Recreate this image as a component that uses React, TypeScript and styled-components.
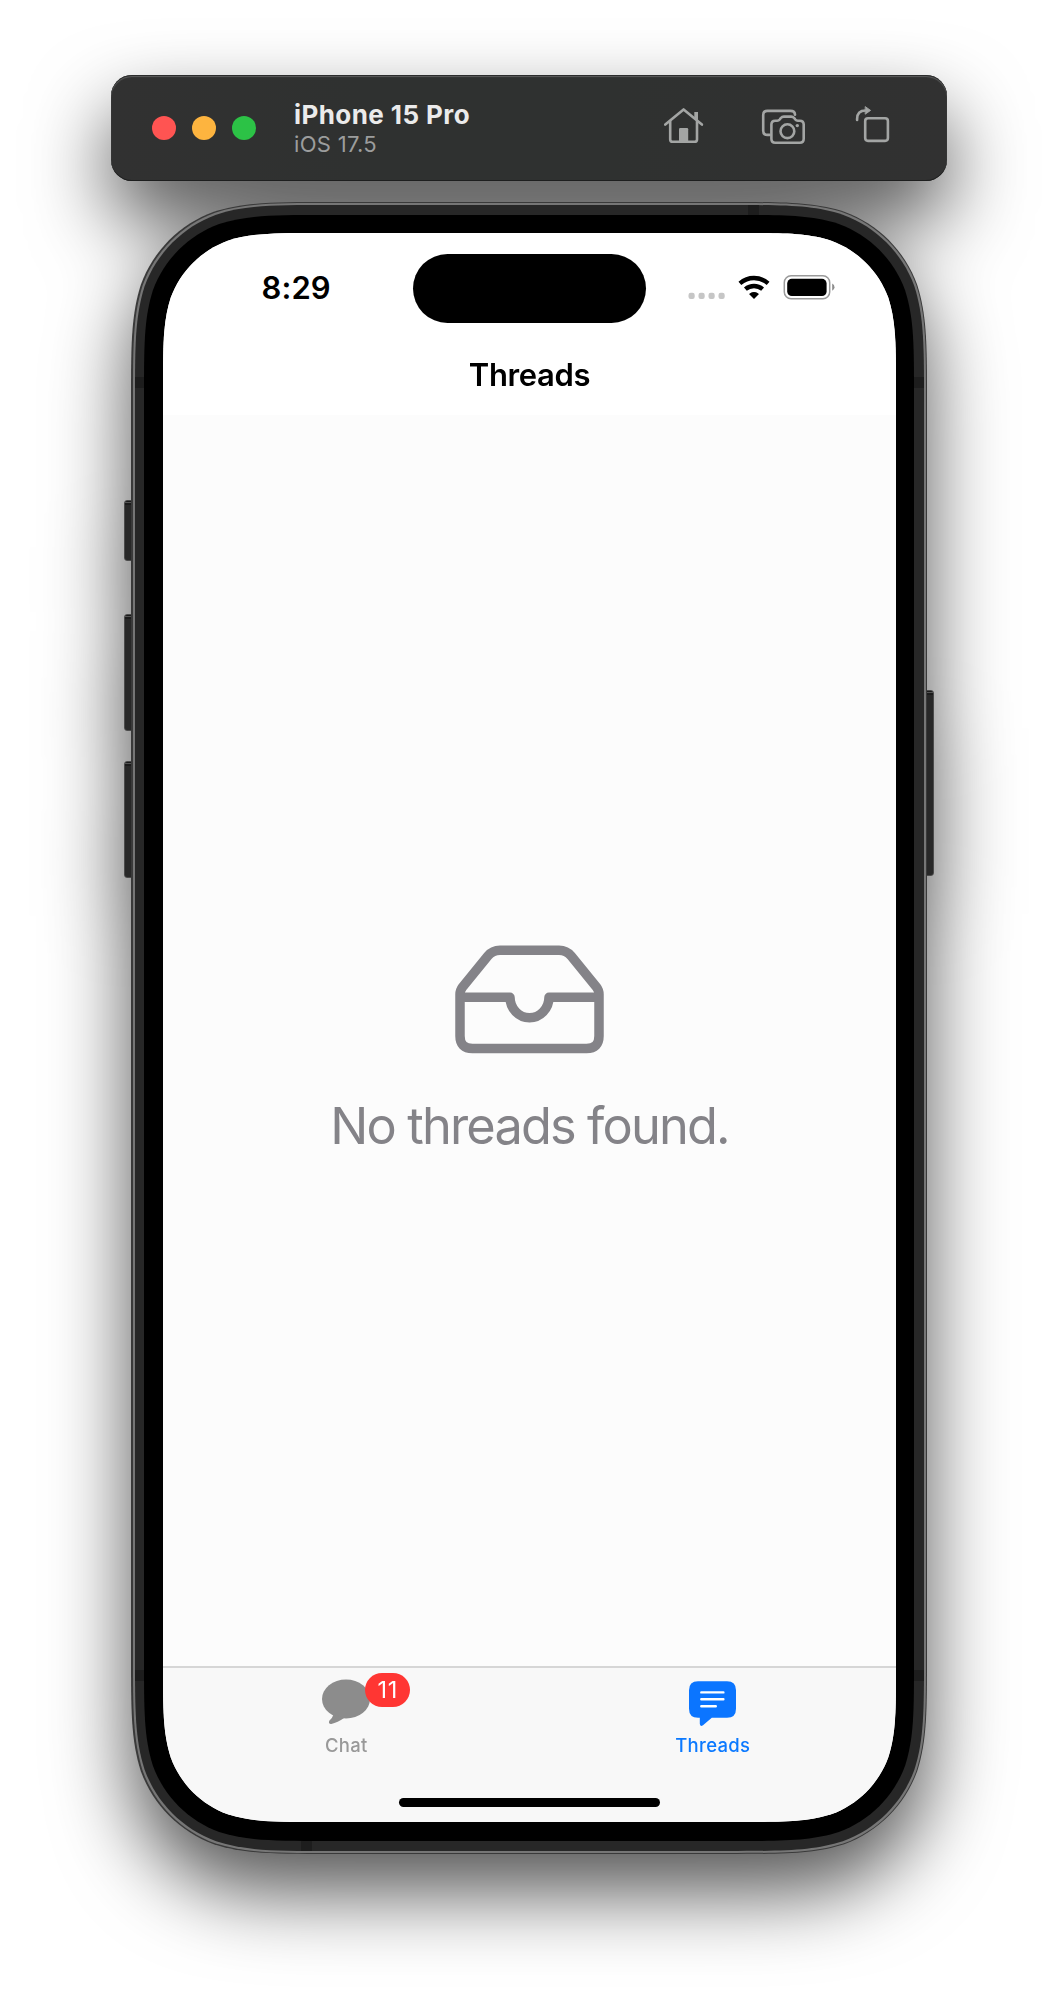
import React from "react";
import styled, { createGlobalStyle } from "styled-components";

/* Continuous-curvature rounded rectangle, as a clip-path value. */
const smoothRect = (w: number, h: number, r: number): string => {
  const k = [1.52866, 1.08849, 0.86841, 0.63149, 0.37282, 0.16906, 0.07491].map((n) => n * r);
  const [a, b, c, d, e, f, g] = k;
  return `path("M ${a} 0 L ${w - a} 0 C ${w - b} 0 ${w - c} 0 ${w - d} ${g} C ${w - e} ${f} ${w - f} ${e} ${w - g} ${d} C ${w} ${c} ${w} ${b} ${w} ${a} L ${w} ${h - a} C ${w} ${h - b} ${w} ${h - c} ${w - g} ${h - d} C ${w - f} ${h - e} ${w - e} ${h - f} ${w - d} ${h - g} C ${w - c} ${h} ${w - b} ${h} ${w - a} ${h} L ${a} ${h} C ${b} ${h} ${c} ${h} ${d} ${h - g} C ${e} ${h - f} ${f} ${h - e} ${g} ${h - d} C 0 ${h - c} 0 ${h - b} 0 ${h - a} L 0 ${a} C 0 ${b} 0 ${c} ${g} ${d} C ${f} ${e} ${e} ${f} ${d} ${g} C ${c} 0 ${b} 0 ${a} 0 Z")`;
};

const GlobalStyle = createGlobalStyle`
  *, *::before, *::after { box-sizing: border-box; }
  body {
    margin: 0;
    background: #fff;
    font-family: Inter, "Liberation Sans", sans-serif;
    overflow: hidden;
  }
`;

const Page = styled.main`
  width: 1058px;
  height: 2004px;
  padding-top: 75px;
  overflow: hidden;
`;

const Simulator = styled.div`
  display: flex;
  flex-direction: column;
  align-items: center;
  gap: 21px;
  filter: drop-shadow(0 38px 40px rgba(0, 0, 0, 0.67));
`;

const Toolbar = styled.header`
  width: 836px;
  height: 106px;
  display: flex;
  align-items: center;
  padding: 0 57px 0 41px;
  border-radius: 21px;
  background: linear-gradient(90deg, #313131, #2f3130 30%, #2f3130 60%, #313131);
  box-shadow: inset 0 1px 0 #2b2c2c, inset 0 2px 1px #5c5d5d, inset 0 -1px 0 #1d1e1e;
`;

const Lights = styled.div`
  display: flex;
  gap: 16px;
`;

const Light = styled.span<{ $color: string }>`
  width: 24px;
  height: 24px;
  border-radius: 50%;
  background: ${(p) => p.$color};
`;

const Device = styled.div`
  flex: 1;
  margin-left: 38px;
  padding-top: 2px;
`;

const DeviceName = styled.div`
  font-size: 26px;
  line-height: 30px;
  font-weight: 700;
  letter-spacing: 0.42px;
  color: #ebebeb;
`;

const DeviceOs = styled.div`
  font-size: 22px;
  line-height: 28px;
  letter-spacing: 0.3px;
  color: #9c9d9d;
`;

const Tools = styled.div`
  display: flex;
  align-items: center;
  padding-bottom: 6px;
  color: #a3a5a4;
`;

const Tool = styled.span<{ $gap?: number }>`
  display: flex;
  margin-left: ${(p) => p.$gap ?? 0}px;
`;

const Phone = styled.div`
  position: relative;
  width: 796px;
  height: 1652px;
`;

const SideButton = styled.span<{ $side: "left" | "right"; $top: number; $height: number }>`
  position: absolute;
  ${(p) => p.$side}: -7px;
  top: ${(p) => p.$top}px;
  width: 11px;
  height: ${(p) => p.$height}px;
  border: 1px solid #4b4b4b;
  border-radius: 3px;
  background: linear-gradient(#1a1a1a 0 1px, #555 1px 2px, #1c1c1c 2px 4px, #282828 4px);
`;

const Edge = styled.div`
  position: relative;
  padding: 1px 1px 1px 2px;
  width: 796px;
  height: 1652px;
  background: #3a3a3a;
  clip-path: ${smoothRect(796, 1652, 131)};
`;

const Highlight = styled.div`
  padding: 2px;
  width: 793px;
  height: 1650px;
  background: #767676;
  clip-path: ${smoothRect(793, 1650, 130)};
`;

const Band = styled.div`
  position: relative;
  padding: 10px 9px;
  width: 789px;
  height: 1646px;
  background: #272727;
  clip-path: ${smoothRect(789, 1646, 128.5)};
`;

const Antenna = styled.span<{ $x: number; $y: number }>`
  position: absolute;
  left: ${(p) => p.$x}px;
  top: ${(p) => p.$y}px;
  width: 11px;
  height: 11px;
  background: #1d1d1d;
`;

const Bezel = styled.div`
  position: relative;
  padding: 18px 19px;
  width: 770px;
  height: 1626px;
  background: #000;
  clip-path: ${smoothRect(770, 1626, 119)};
`;

const Screen = styled.div`
  display: flex;
  flex-direction: column;
  width: 733px;
  height: 1589px;
  background: #fcfcfc;
  clip-path: ${smoothRect(733, 1589, 102.6)};
`;

const NavArea = styled.div`
  height: 182px;
  background: #fff;
`;

const StatusBar = styled.div`
  height: 110px;
  padding-top: 20.5px;
  display: grid;
  grid-template-columns: 249.7px 233.6px 1fr;
`;

const Clock = styled.time`
  padding: 14px 0 0 98.5px;
  font-size: 31px;
  line-height: 40px;
  font-weight: 600;
  letter-spacing: 0.1px;
`;

const Island = styled.div`
  height: 69px;
  border-radius: 35px;
  background: #000;
`;

const Indicators = styled.div`
  display: flex;
  padding: 20.5px 0 0 42px;
`;

const NavTitle = styled.h1`
  margin: 12px 0 0;
  text-align: center;
  font-size: 31px;
  line-height: 40px;
  font-weight: 600;
  letter-spacing: -0.35px;
`;

const Empty = styled.section`
  flex: 1;
  display: flex;
  flex-direction: column;
  align-items: center;
  padding-top: 529.5px;
  color: #848388;
`;

const EmptyText = styled.p`
  margin: 40px 0 0;
  font-size: 50.5px;
  line-height: 64px;
  letter-spacing: -1.85px;
`;

const TabBar = styled.nav`
  height: 156px;
  border-top: 2px solid #d6d6d6;
  background: #f8f8f8;
  display: flex;
  flex-direction: column;
  align-items: center;
`;

const Tabs = styled.div`
  width: 100%;
  height: 129.5px;
  display: grid;
  grid-template-columns: 1fr 1fr;
`;

const Tab = styled.div<{ $active?: boolean }>`
  display: flex;
  flex-direction: column;
  align-items: center;
  padding-top: 11px;
  font-size: 18.5px;
  line-height: 24px;
  font-weight: 500;
  letter-spacing: 0.3px;
  color: ${(p) => (p.$active ? "#0b79ff" : "#999")};
`;

const TabIcon = styled.div`
  position: relative;
  height: 54px;
`;

const Badge = styled.span`
  position: absolute;
  left: 43px;
  top: -6px;
  width: 45px;
  height: 34px;
  border-radius: 17px;
  background: #ff3633;
  color: #fff;
  font-size: 23.5px;
  font-weight: 400;
  line-height: 34px;
  letter-spacing: 0.6px;
  text-align: center;
`;

const HomeIndicator = styled.div`
  width: 261px;
  height: 9.5px;
  border-radius: 5px;
  background: #000;
`;

const HomeIcon = () => (
  <svg width="42" height="40" viewBox="663 105 42 40" fill="none" stroke="currentColor" strokeWidth="2.6" strokeLinecap="round" strokeLinejoin="round">
    <path d="M665.3 124.6 L683.6 109.4 L701.9 124.6" />
    <path d="M670.2 121.5 V139.4 Q670.2 141.8 672.6 141.8 H694.6 Q697 141.8 697 139.4 V121.5" />
    <path d="M694.3 112 H698 V120.6 L694.3 117.6 Z" fill="currentColor" stroke="none" />
    <path d="M679 142 V129.2 Q679 128 680.2 128 H687 Q688.2 128 688.2 129.2 V142 Z" fill="currentColor" stroke="none" />
  </svg>
);

const CameraIcon = () => (
  <svg width="45" height="40" viewBox="761 105 45 40" fill="none" stroke="currentColor" strokeWidth="2.6" strokeLinejoin="round" strokeLinecap="round">
    <path d="M769.6 134.9 H767.3 Q763.2 134.9 763.2 130.8 V115 Q763.2 110.9 767.3 110.9 H790.6 Q794.8 110.9 795 114.6" />
    <path d="M775.2 120.7 H777.2 Q778.7 120.7 779.7 119.5 L780.8 118 Q782 116.6 783.8 116.6 H791.2 Q793 116.6 794.2 118 L795.3 119.5 Q796.3 120.7 797.8 120.7 H799.8 Q803.7 120.7 803.7 124.6 V138.8 Q803.7 142.8 799.8 142.8 H775.2 Q771.4 142.8 771.4 138.8 V124.6 Q771.4 120.7 775.2 120.7 Z" />
    <circle cx="787.4" cy="131.2" r="6.9" />
    <circle cx="797.3" cy="125.6" r="1.7" fill="currentColor" stroke="none" />
  </svg>
);

const RotateIcon = () => (
  <svg width="35" height="40" viewBox="855 105 35 40" fill="none" stroke="currentColor" strokeWidth="2.6" strokeLinecap="round">
    <rect x="865.2" y="118.2" width="22.7" height="22.7" rx="2.8" />
    <path d="M857.1 120 V119 Q857.1 110.5 865.6 110.5" />
    <path d="M865.5 106.8 L870.6 110.4 L865.5 114 Z" fill="currentColor" strokeWidth="0.9" strokeLinejoin="round" />
  </svg>
);

const StatusIcons = () => (
  <svg width="148" height="26" viewBox="688.5 274 148 26">
    {[689, 699, 709, 719].map((x) => (
      <rect key={x} x={x} y="292.7" width="6.2" height="6.2" rx="2.2" fill="#c6c6c6" />
    ))}
    <g fill="none" stroke="#000" strokeWidth="4.3">
      <path d="M740.4 283.4 Q746.6 278 754.5 278 Q762.4 278 768.6 283.4" />
      <path d="M745.9 289.2 Q749.6 286 754.5 286 Q759.4 286 763.1 289.2" />
    </g>
    <path d="M754.5 299 L750 294.6 Q749.5 294 750.2 293.5 Q754.5 290.6 758.8 293.5 Q759.5 294 759 294.6 Z" />
    <rect x="784.8" y="275.8" width="45.4" height="23" rx="6.8" fill="#fff" stroke="#9a9a9a" strokeWidth="1.5" />
    <rect x="787.7" y="278.8" width="39.4" height="17.2" rx="4.6" />
    <path d="M832.7 283.6 Q835 285 835 287.2 Q835 289.5 832.7 290.8 Z" fill="#8c8c8c" />
  </svg>
);

const TrayIcon = () => (
  <svg width="150" height="109" viewBox="455 944.5 150 109" fill="none" stroke="currentColor" strokeWidth="9.5" strokeLinejoin="round">
    <path d="M460 994 Q460 989.8 462.8 986.2 L487.8 955.6 Q492.5 949.8 500 949.8 H559 Q566.5 949.8 571.2 955.6 L596.2 986.2 Q599 989.8 599 994 V1035.5 Q599 1048 586.5 1048 H472.5 Q460 1048 460 1035.5 Z" />
    <path d="M460 996.8 H510 A19.5 20.4 0 0 0 549 996.8 H599" />
  </svg>
);

const ChatIcon = () => (
  <svg width="48" height="46" viewBox="322 1679.5 48 46" fill="#8c8c8c">
    <ellipse cx="346" cy="1699.5" rx="24" ry="19.6" />
    <path d="M333.5 1715 Q332.5 1718.5 329.3 1721.3 Q328 1724.6 331.3 1724.4 Q337.5 1723 344.5 1718.2 Z" />
  </svg>
);

const ThreadsIcon = () => (
  <svg width="48" height="47" viewBox="689 1679 48 47">
    <path fill="#0b75ff" d="M698 1681.3 H727 Q736 1681.3 736 1690.3 V1708.7 Q736 1717.7 727 1717.7 H711.8 L703 1725.3 Q700 1727 699.8 1723.8 V1717.7 H698 Q689 1717.7 689 1708.7 V1690.3 Q689 1681.3 698 1681.3 Z" />
    <path fill="none" stroke="#fff" strokeWidth="2.4" strokeLinecap="round" d="M701.3 1692.4 H723.4 M701.3 1699.3 H723.4 M701.3 1706.3 H715.8" />
  </svg>
);

const antennas: [number, number][] = [
  [613, 0],
  [0, 172],
  [778, 172],
  [0, 1464.5],
  [778, 1464.5],
  [165.5, 1636],
];

export default function App() {
  return (
    <>
      <GlobalStyle />
      <Page>
        <Simulator>
          <Toolbar>
            <Lights>
              <Light $color="#ff5452" />
              <Light $color="#fdb43f" />
              <Light $color="#2cc246" />
            </Lights>
            <Device>
              <DeviceName>iPhone 15 Pro</DeviceName>
              <DeviceOs>iOS 17.5</DeviceOs>
            </Device>
            <Tools>
              <Tool>
                <HomeIcon />
              </Tool>
              <Tool $gap={56}>
                <CameraIcon />
              </Tool>
              <Tool $gap={49}>
                <RotateIcon />
              </Tool>
            </Tools>
          </Toolbar>
          <Phone>
            <SideButton $side="left" $top={298} $height={61} />
            <SideButton $side="left" $top={412} $height={117} />
            <SideButton $side="left" $top={559} $height={117} />
            <SideButton $side="right" $top={488} $height={186} />
            <Edge>
              <Highlight>
                <Band>
                  {antennas.map(([x, y]) => (
                    <Antenna key={`${x}-${y}`} $x={x} $y={y} />
                  ))}
                  <Bezel>
                    <Screen>
                      <NavArea>
                        <StatusBar>
                          <Clock>8:29</Clock>
                          <Island />
                          <Indicators>
                            <StatusIcons />
                          </Indicators>
                        </StatusBar>
                        <NavTitle>Threads</NavTitle>
                      </NavArea>
                      <Empty>
                        <TrayIcon />
                        <EmptyText>No threads found.</EmptyText>
                      </Empty>
                      <TabBar>
                        <Tabs>
                          <Tab>
                            <TabIcon>
                              <ChatIcon />
                              <Badge>11</Badge>
                            </TabIcon>
                            Chat
                          </Tab>
                          <Tab $active>
                            <TabIcon>
                              <ThreadsIcon />
                            </TabIcon>
                            Threads
                          </Tab>
                        </Tabs>
                        <HomeIndicator />
                      </TabBar>
                    </Screen>
                  </Bezel>
                </Band>
              </Highlight>
            </Edge>
          </Phone>
        </Simulator>
      </Page>
    </>
  );
}
